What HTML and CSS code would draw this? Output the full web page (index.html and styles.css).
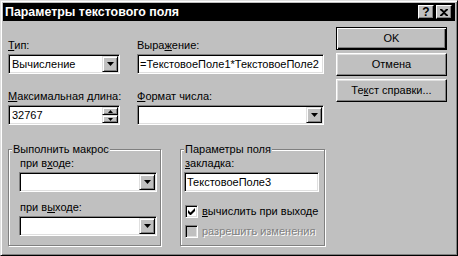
FILE: index.html
```html
<!DOCTYPE html>
<html lang="ru">

<head>
  <meta charset="UTF-8">
  <meta name="viewport" content="width=device-width, initial-scale=1.0">
  <title>Параметры текстового поля</title>
  <link rel="stylesheet" href="styles.css">
</head>

<body>
  <div class="dialog">
    <div class="titlebar">
      <span class="title">Параметры текстового поля</span>
      <div class="title-buttons">
        <span class="tbtn help">?</span>
        <span class="tbtn">
          <svg width="8" height="7" viewBox="0 0 8 7"><path d="M0 0h2l2 2 2-2h2v1L5 3.5 8 6v1H6L4 5 2 7H0V6l3-2.5L0 1z" fill="#000"/></svg>
        </span>
      </div>
    </div>

    <div class="main">
      <div class="fields">
        <div class="top-grid">
          <div class="field">
            <label><u>Т</u>ип:</label>
            <div class="combo">
              <span class="value">Вычисление</span>
              <span class="drop"><svg width="7" height="4" viewBox="0 0 7 4"><path d="M0 0h7L3.5 4z" fill="#000"/></svg></span>
            </div>
          </div>
          <div class="field">
            <label>Выра<u>ж</u>ение:</label>
            <div class="edit">=ТекстовоеПоле1*ТекстовоеПоле2</div>
          </div>
          <div class="field">
            <label><u>М</u>аксимальная длина:</label>
            <div class="combo">
              <span class="value">32767</span>
              <span class="spin">
                <span class="spin-btn"><svg width="5" height="3" viewBox="0 0 5 3"><path d="M0 3h5L2.5 0z" fill="#000"/></svg></span>
                <span class="spin-btn"><svg width="5" height="3" viewBox="0 0 5 3"><path d="M0 0h5L2.5 3z" fill="#000"/></svg></span>
              </span>
            </div>
          </div>
          <div class="field">
            <label><u>Ф</u>ормат числа:</label>
            <div class="combo">
              <span class="value"></span>
              <span class="drop"><svg width="7" height="4" viewBox="0 0 7 4"><path d="M0 0h7L3.5 4z" fill="#000"/></svg></span>
            </div>
          </div>
        </div>

        <div class="groups">
          <fieldset class="group macro">
            <legend>Выполнить макрос</legend>
            <label>при в<u>х</u>оде:</label>
            <div class="combo">
              <span class="value"></span>
              <span class="drop"><svg width="7" height="4" viewBox="0 0 7 4"><path d="M0 0h7L3.5 4z" fill="#000"/></svg></span>
            </div>
            <label class="second">при в<u>ы</u>ходе:</label>
            <div class="combo">
              <span class="value"></span>
              <span class="drop"><svg width="7" height="4" viewBox="0 0 7 4"><path d="M0 0h7L3.5 4z" fill="#000"/></svg></span>
            </div>
          </fieldset>

          <fieldset class="group params">
            <legend>Параметры поля</legend>
            <label><u>з</u>акладка:</label>
            <div class="edit">ТекстовоеПоле3</div>
            <div class="check">
              <span class="box"><svg width="7" height="7" viewBox="0 0 7 7"><path d="M0 2v3l2 2h1l4-4V0L2.5 4.5z" fill="#000"/></svg></span>
              <span><u>в</u>ычислить при выходе</span>
            </div>
            <div class="check disabled">
              <span class="box"></span>
              <span>разрешить изменения</span>
            </div>
          </fieldset>
        </div>
      </div>

      <div class="buttons">
        <span class="btn default">OK</span>
        <span class="btn">Отмена</span>
        <span class="btn">Те<u>к</u>ст справки...</span>
      </div>
    </div>
  </div>
</body>

</html>
```

FILE: styles.css
```css
body {
  margin: 0;
  font-family: "Liberation Sans", Arial, sans-serif;
  font-size: 11px;
  line-height: 13px;
  color: #000;
}

u {
  text-decoration-thickness: 1px;
  text-underline-offset: 1px;
}

.dialog {
  width: 458px;
  height: 256px;
  box-sizing: border-box;
  background: #c0c0c0;
  border: 1px solid;
  border-color: #dfdfdf #000 #000 #dfdfdf;
  box-shadow: inset 1px 1px #fff, inset -1px -1px #808080;
  padding: 2px;
}

/* title bar */

.titlebar {
  height: 18px;
  background: #000;
  display: flex;
  align-items: center;
  justify-content: space-between;
  padding: 0 3px 0 2px;
}

.title {
  color: #fff;
  font-weight: bold;
  font-size: 12.4px;
}

.title-buttons {
  display: flex;
  gap: 2px;
}

.tbtn {
  width: 16px;
  height: 14px;
  box-sizing: border-box;
  background: #c0c0c0;
  border: 1px solid;
  border-color: #fff #000 #000 #fff;
  box-shadow: inset -1px -1px #808080;
  display: flex;
  align-items: center;
  justify-content: center;
}

.tbtn.help {
  font-weight: bold;
  font-size: 12px;
  line-height: 11px;
}

/* main layout */

.main {
  display: flex;
  padding: 6px 8px 0 5px;
}

.fields {
  width: 317px;
  padding-top: 12px;
}

.top-grid {
  display: grid;
  grid-template-columns: 112px 187px;
  column-gap: 17px;
  row-gap: 16px;
}

.field label,
.group label {
  display: block;
  margin-bottom: 2px;
  white-space: nowrap;
}

/* controls */

.combo,
.edit {
  height: 20px;
  box-sizing: border-box;
  background: #fff;
  border: 1px solid;
  border-color: #808080 #fff #fff #808080;
  box-shadow: inset 1px 1px #000, inset -1px -1px #dfdfdf;
  padding: 2px 2px 2px 3px;
  display: flex;
  align-items: center;
  white-space: nowrap;
  overflow: hidden;
}

.edit {
  padding-left: 2px;
}

.combo .value {
  flex: 1;
}

.drop,
.spin-btn {
  background: #c0c0c0;
  box-sizing: border-box;
  border: 1px solid;
  border-color: #dfdfdf #000 #000 #dfdfdf;
  box-shadow: inset 1px 1px #fff, inset -1px -1px #808080;
  display: flex;
  align-items: center;
  justify-content: center;
}

.drop {
  width: 16px;
  height: 16px;
  margin-right: -1px;
}

.spin {
  display: flex;
  flex-direction: column;
  margin-right: -1px;
}

.spin-btn {
  width: 16px;
  height: 8px;
}

/* group boxes */

.groups {
  display: flex;
  gap: 19px;
  margin-top: 18px;
}

.group {
  margin: 0;
  padding: 1px 3px 8px 2px;
  border: 1px solid #808080;
  box-shadow: 1px 1px #fff, inset 1px 1px #fff;
  height: 103px;
  box-sizing: border-box;
}

.group legend {
  padding: 0 1px;
  margin-left: 1px;
  background: #c0c0c0;
}

.macro {
  width: 153px;
}

.macro .combo {
  margin-left: 8px;
}

.macro label {
  margin-left: 9px;
}

.params {
  width: 145px;
}

.group label.second {
  margin-top: 9px;
}

.params label {
  margin-left: 2px;
}

.params .edit {
  width: 135px;
  margin-left: 1px;
}

.check {
  display: flex;
  align-items: center;
  gap: 4px;
  margin: 13px 0 0 2px;
}

.check .box {
  width: 13px;
  height: 13px;
  box-sizing: border-box;
  background: #fff;
  border: 1px solid;
  border-color: #808080 #fff #fff #808080;
  box-shadow: inset 1px 1px #000, inset -1px -1px #dfdfdf;
  display: flex;
  align-items: center;
  justify-content: center;
}

.check.disabled {
  margin-top: 7px;
  color: #808080;
  text-shadow: 1px 1px #fff;
}

.check.disabled .box {
  background: #c0c0c0;
}

/* buttons */

.buttons {
  margin-left: 11px;
  width: 111px;
  display: flex;
  flex-direction: column;
  gap: 3px;
}

.btn {
  height: 23px;
  box-sizing: border-box;
  border: 1px solid;
  border-color: #fff #000 #000 #fff;
  box-shadow: inset -1px -1px #808080, inset 1px 1px #dfdfdf;
  display: flex;
  align-items: center;
  justify-content: center;
}

.btn.default {
  border: 1px solid #000;
  box-shadow: inset 1px 1px #fff, inset -1px -1px #000, inset -2px -2px #808080;
}
```
